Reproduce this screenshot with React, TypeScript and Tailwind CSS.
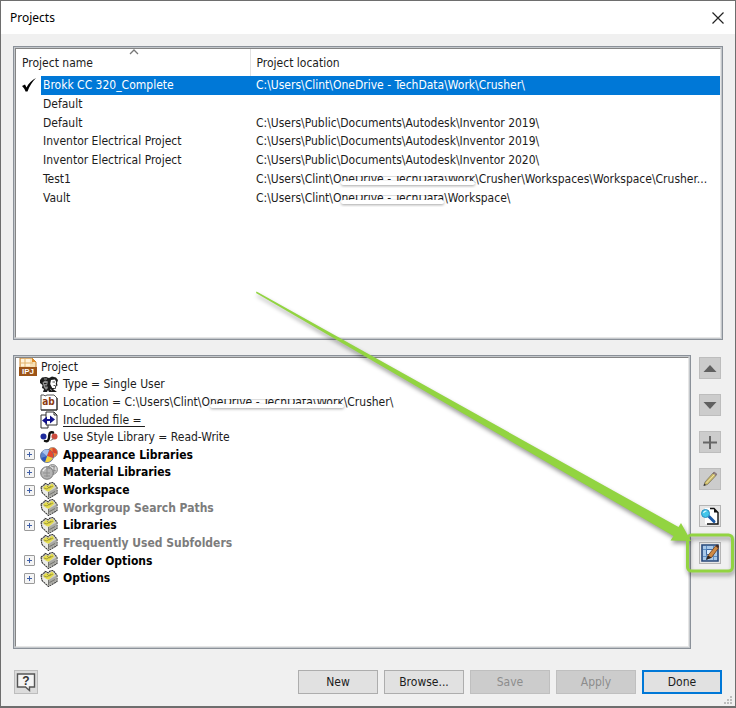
import { useState } from 'react';
import type { ReactNode } from 'react';
import clsx from 'clsx';

type Project = { id: number; name: string; path: [string, string, string] };

// path = [start, redacted part, rest]
const projects: Project[] = [
    { id: 1, name: 'Brokk CC 320_Complete', path: ['C:\\Users\\Clint\\OneDrive - TechData\\Work\\Crusher\\', '', ''] },
    { id: 2, name: 'Default', path: ['', '', ''] },
    { id: 3, name: 'Default', path: ['C:\\Users\\Public\\Documents\\Autodesk\\Inventor 2019\\', '', ''] },
    { id: 4, name: 'Inventor Electrical Project', path: ['C:\\Users\\Public\\Documents\\Autodesk\\Inventor 2019\\', '', ''] },
    { id: 5, name: 'Inventor Electrical Project', path: ['C:\\Users\\Public\\Documents\\Autodesk\\Inventor 2020\\', '', ''] },
    { id: 6, name: 'Test1', path: ['C:\\Users\\Clint\\O', 'neDrive - TechData\\Work', '\\Crusher\\Workspaces\\Workspace\\Crusher...'] },
    { id: 7, name: 'Vault', path: ['C:\\Users\\Clint\\O', 'neDrive - TechData', '\\Workspace\\'] },
];

// Text with white marker strokes over its top and bottom edges
function Redacted({ children }: { children: ReactNode }) {
    return (
        <span className="relative inline-block">
            {children}
            <span className="absolute inset-x-0 top-px h-1 rounded-full bg-white shadow-[0_1px_1px_rgba(0,0,0,0.15)]" />
            <span className="absolute inset-x-0 bottom-[2px] h-1 rounded-full bg-white shadow-[0_1px_3px_rgba(0,0,0,0.35)]" />
        </span>
    );
}

function Path({ parts }: { parts: [string, string, string] }) {
    return (
        <>
            {parts[0]}
            {parts[1] && <Redacted>{parts[1]}</Redacted>}
            {parts[2]}
        </>
    );
}

/* ---------- tree icons ---------- */

function IpjIcon() {
    return (
        <svg viewBox="0 0 18 19" className="h-[19px] w-[18px] shrink-0" aria-hidden="true">
            <path d="M1 1h12l4 4v13H1z" fill="#f6dfb4" stroke="#c9822c" />
            <path d="M2 2h9v7H2z" fill="#fff4dc" />
            <path d="M6 2v8M2 6h12" stroke="#e3b56c" />
            <path d="M13 1v4h4z" fill="#e08a22" />
            <path d="M0 10h18v9H0z" fill="#9c5418" />
            <text x="9" y="17" textAnchor="middle" fontSize="8" fontWeight="700" fill="#fff" fontFamily="Liberation Sans, sans-serif">IPJ</text>
        </svg>
    );
}

function UsersIcon() {
    return (
        <svg viewBox="0 0 18 16" className="h-4 w-[18px] shrink-0" aria-hidden="true">
            <path d="M0 4 2 1.500 6 1l3 1 3-1.500 4 1L18 4l-1 3 .500 2.500-1.500 1v2l-3 .500 4 3H9l-1-2-1 2H3l1-3-2-1 .500-3L0 7z" fill="#1c1c1c" />
            <path d="M2.500 6.500 5 4.500l3 1L7 9.500l1 2.500-2 2-2-2.500z" fill="#8d8d8d" />
            <path d="M4 7.500h2.500M5 10h2" stroke="#222" />
            <path d="M11 4l4-.500 1.200 2.500-.500 2 .700 1.500-1.200.500v2h-3l-2-4z" fill="#fff" />
            <path d="M12.500 6h2.500M13.500 9.500h2" stroke="#222" strokeWidth=".8" />
            <path d="M4 3h3M10 13l2 1.500" stroke="#999" />
        </svg>
    );
}

function LocationIcon() {
    return (
        <svg viewBox="0 0 18 17" className="h-[17px] w-[18px] shrink-0" aria-hidden="true">
            <path d="M1 1h3l1 1 2-1h7l3 3v12H1z" fill="#fff" stroke="#555" />
            <path d="M17 4v12H1" fill="none" stroke="#222" />
            <text x="8.500" y="11" textAnchor="middle" fontSize="10" fontWeight="700" fill="#8b3a12" fontFamily="DejaVu Sans Condensed, sans-serif">ab</text>
        </svg>
    );
}

function IncludedIcon() {
    return (
        <svg viewBox="0 0 18 18" className="h-[18px] w-[18px] shrink-0" aria-hidden="true">
            <path d="M1 4h7v13H1z" fill="#fff" stroke="#333" />
            <path d="M6 1h8l3 3v10H6z" fill="#fff" stroke="#333" />
            <path d="M14 1v3h3" fill="none" stroke="#333" />
            <path d="M2 9.500 7 5.500V8h3V4.500l5 4-5 4V10H7v3.500z" fill="#12128c" />
        </svg>
    );
}

function StyleIcon() {
    return (
        <svg viewBox="0 0 18 12" className="h-3 w-[18px] shrink-0" aria-hidden="true">
            <circle cx="3.500" cy="5.500" r="3" fill="#1d2a9c" />
            <circle cx="14.500" cy="5.500" r="3" fill="#cc4a3c" />
            <path d="M13 1.500C8.500 0 9.500 4.500 9 7s-1.500 4-4 3" fill="none" stroke="#111" strokeWidth="2.400" strokeLinecap="round" />
            <path d="M10.500 9.500 14 7.500" stroke="#777" />
        </svg>
    );
}

function AppearanceIcon() {
    return (
        <svg viewBox="0 0 18 16" className="h-4 w-[18px] shrink-0" aria-hidden="true">
            <circle cx="12.500" cy="5.500" r="5" fill="#f08a3c" stroke="#8b8b8b" strokeWidth=".8" />
            <path d="M12.500 5.500V.800a5 5 0 0 1 4.500 6z" fill="#d9452c" />
            <circle cx="7" cy="9" r="6.500" fill="#5f86cf" stroke="#4a5d88" strokeWidth=".8" />
            <path d="M7 9 2 5a6.500 6.500 0 0 1 7-2z" fill="#a9c3ee" />
            <path d="M7 9 9.500 3A6.500 6.500 0 0 1 13 11z" fill="#e5482d" />
            <path d="M7 9l5.800 2A6.500 6.500 0 0 1 5 15z" fill="#f2d03c" />
            <path d="M7 9 5 15a6.500 6.500 0 0 1-4-4z" fill="#2d55b8" />
        </svg>
    );
}

function MaterialIcon() {
    return (
        <svg viewBox="0 0 18 16" className="h-4 w-[18px] shrink-0" aria-hidden="true">
            <circle cx="12.500" cy="5.500" r="4.900" fill="#d6d6d6" stroke="#777" strokeWidth=".9" />
            <path d="M11 2l4 1M13 6l3 1M14 2v7" stroke="#8c8c8c" />
            <circle cx="7" cy="9" r="6.300" fill="#b4b4b4" stroke="#6d6d6d" strokeWidth=".9" />
            <path d="M4 5.500c2-2 4-1.500 6-1M3 9h7M7 4v9M4 12h6" stroke="#8f8f8f" fill="none" />
            <path d="M3 7c1-2 2-2.500 3-3" stroke="#f1f1f1" strokeWidth="1.300" fill="none" />
        </svg>
    );
}

function FolderIcon() {
    return (
        <svg viewBox="0 0 18 17" className="h-[17px] w-[18px] shrink-0" aria-hidden="true">
            <path d="M1 5 4 3l1-1.500 2 .500 1 1 2-2 3-.500 2 2 2 3v6l-8.500 5L2 10.500z" fill="#d0d0ca" stroke="#333" strokeWidth="1.100" strokeDasharray="2 .6" />
            <path d="M3 5.500 6 3l3 1 3-2.500 2.500 3L9 9.500 6 10z" fill="#e6de4c" />
            <path d="M4 6l3 1 4-3M7 4l2 2 4-2" stroke="#8f8a3a" fill="none" strokeWidth=".8" />
            <path d="M8.500 10 16.500 5.500v5.500l-8 4.500z" fill="#a9a9a4" />
            <path d="M2 6.500 8.500 10v5.500L3 10.500z" fill="#ecece8" />
            <path d="M9.500 12.500 15 9.500M8.500 10v5" stroke="#74746f" />
        </svg>
    );
}

/* ---------- tree ---------- */

type Node = { id: string; label: ReactNode; icon: ReactNode; kind?: 'prop' | 'group' | 'muted' };

const nodes: Node[] = [
    { id: 'type', label: 'Type = Single User', icon: <UsersIcon /> },
    { id: 'location', label: <Path parts={['Location = C:\\Users\\Clint\\O', 'neDrive - TechData\\Work', '\\Crusher\\']} />, icon: <LocationIcon /> },
    { id: 'included', label: <span className="underline underline-offset-2">Included file =&nbsp;</span>, icon: <IncludedIcon /> },
    { id: 'style', label: 'Use Style Library = Read-Write', icon: <StyleIcon /> },
    { id: 'appearance', label: 'Appearance Libraries', icon: <AppearanceIcon />, kind: 'group' },
    { id: 'material', label: 'Material Libraries', icon: <MaterialIcon />, kind: 'group' },
    { id: 'workspace', label: 'Workspace', icon: <FolderIcon />, kind: 'group' },
    { id: 'workgroup', label: 'Workgroup Search Paths', icon: <FolderIcon />, kind: 'muted' },
    { id: 'libraries', label: 'Libraries', icon: <FolderIcon />, kind: 'group' },
    { id: 'frequent', label: 'Frequently Used Subfolders', icon: <FolderIcon />, kind: 'muted' },
    { id: 'folder', label: 'Folder Options', icon: <FolderIcon />, kind: 'group' },
    { id: 'options', label: 'Options', icon: <FolderIcon />, kind: 'group' },
];

function Expander({ name }: { name: string }) {
    return (
        <button type="button" aria-label={`Expand ${name}`} className="flex size-[11px] items-center justify-center rounded-[1px] border border-[#9a9a9a] bg-[#f4f4f4]">
            <svg viewBox="0 0 7 7" className="size-[7px]" aria-hidden="true">
                <path d="M1 3.500h5M3.500 1v5" stroke="#3f5fa8" />
            </svg>
        </button>
    );
}

function Tree() {
    return (
        <ul className="grid h-[229px] auto-rows-fr pl-[3px]">
            <li className="flex items-center gap-1">
                <IpjIcon />
                Project
            </li>
            {nodes.map((node) => (
                <li key={node.id} className="flex items-center whitespace-nowrap">
                    <span className="flex w-[21px] shrink-0 pl-[5px]">
                        {node.kind === 'group' && <Expander name={String(node.label)} />}
                    </span>
                    {node.icon}
                    <span
                        className={clsx('pl-[5px]', {
                            'font-bold text-black': node.kind === 'group',
                            'font-bold text-[#7c7c7c]': node.kind === 'muted',
                        })}
                    >
                        {node.label}
                    </span>
                </li>
            ))}
        </ul>
    );
}

/* ---------- side tools ---------- */

const tools = [
    {
        label: 'Move up',
        disabled: true,
        icon: <path d="M4.500 15 11 8l6.500 7z" fill="#606060" />,
    },
    {
        label: 'Move down',
        disabled: true,
        icon: <path d="M4.500 8h13L11 15z" fill="#606060" />,
    },
    {
        label: 'Add',
        disabled: true,
        icon: <path d="M11 5v13M4 11.500h14" stroke="#666" strokeWidth="2" />,
    },
    {
        label: 'Edit',
        disabled: true,
        icon: (
            <>
                <path d="M5 17.500 6 14 14 5l3 2.500-8.500 9z" fill="#cdbb66" stroke="#7b7664" strokeWidth=".8" />
                <path d="M14 5l1-1 2.800 2L17 7.500z" fill="#9a8686" stroke="#7a6a6a" strokeWidth=".7" />
                <path d="M7.500 15 15.500 6.500" stroke="#efe6b0" />
                <path d="M4.500 18l.800-2.500 1.700 1.500z" fill="#333" />
            </>
        ),
    },
    {
        label: 'Workspace search',
        disabled: false,
        icon: (
            <>
                <path d="M9 3h6l4 4v12H6V3z" fill="#fff" />
                <path d="M11 3.500h4l4 4V19H8" fill="none" stroke="#111" strokeWidth="1.400" />
                <path d="M15 3.500v4h4" fill="#111" />
                <path d="m10 11.500 5 5" stroke="#1c5ba8" strokeWidth="3" strokeLinecap="round" />
                <circle cx="6.500" cy="8.500" r="4" fill="#42c6ea" stroke="#2a8cc0" />
                <path d="M4.500 8c.500-1.500 1.500-2 3-2" stroke="#d8f7ff" strokeWidth="1.200" fill="none" />
            </>
        ),
    },
    {
        label: 'Configure Content Center',
        disabled: false,
        icon: (
            <>
                <path d="M3 3h16v16H3z" fill="#a9c8e8" stroke="#27487a" strokeWidth="1.600" />
                <path d="M4 7.500h14M4 14.500h14M7.500 4v14M14.500 4v14" stroke="#5f8fc4" />
                <path d="M7.500 7.500h6v5h-6z" fill="#d9eafa" stroke="#3d69a4" />
                <path d="M8 17 9 13.500 16.500 4l3 2-7 9.500z" fill="#cf8a45" stroke="#6f3c18" strokeWidth=".8" />
                <path d="m16.500 4 1.500-1.500 2 1.500-.500 2z" fill="#4a2a1a" />
                <path d="M7 18 9 13.500l3.500 2z" fill="#2c2420" />
            </>
        ),
    },
];

function ToolBar() {
    return (
        <div className="flex flex-col gap-[15px] pt-[2px]">
            {tools.map((tool) => (
                <button
                    key={tool.label}
                    type="button"
                    aria-label={tool.label}
                    disabled={tool.disabled}
                    className={clsx(
                        'flex h-[22px] w-[22px] items-center justify-center border',
                        tool.disabled ? 'border-[#bdbdbd] bg-[#cccccc]' : 'border-[#b4b4b4] bg-[#e6e6e6]',
                    )}
                >
                    <svg viewBox="0 0 22 22" className="size-[22px] shrink-0" aria-hidden="true">
                        {tool.icon}
                    </svg>
                </button>
            ))}
        </div>
    );
}

const panel = 'flex-1 border border-[#8b9199] bg-[#c4c8cc] p-px';
const panelInner = 'h-full overflow-hidden border border-t-[#858585] border-l-[#858585] border-r-[#e6e6e6] border-b-[#e6e6e6] bg-white';
const footerButton =
    'h-6 w-20 border text-center border-[#adadad] bg-[#e1e1e1] disabled:border-[#bfbfbf] disabled:bg-[#cccccc] disabled:text-[#8c8c8c]';

export default function App() {
    const [selected, setSelected] = useState(1);

    return (
        <div className="relative flex min-h-screen flex-col overflow-hidden border border-b-2 border-[#6e6e6e] bg-[#f0f0f0] font-['DejaVu_Sans_Condensed','DejaVu_Sans',sans-serif] text-[12px] leading-4 text-[#1c1c1c]">
            {/* title bar */}
            <header className="flex h-[33px] items-center justify-between bg-white pr-[11px] pl-[9px]">
                <h1 className="font-['Noto_Sans',sans-serif] text-[12px] text-black">Projects</h1>
                <button type="button" aria-label="Close">
                    <svg viewBox="0 0 12 12" className="size-3" aria-hidden="true">
                        <path d="M.500.500l11 11M11.500.500l-11 11" stroke="#222" strokeWidth="1.200" />
                    </svg>
                </button>
            </header>

            <main className="flex flex-1 flex-col gap-[15px] px-3 pt-3">
                {/* project list */}
                <section className="flex flex-1 basis-0">
                    <div className={panel}>
                        <div className={panelInner}>
                            <table className="w-full table-fixed border-collapse">
                                <thead>
                                    <tr className="h-[27px]">
                                        <th className="w-[26px] p-0" />
                                        <th className="relative w-[208px] border-r border-[#e2e2e2] p-0 text-left font-normal">
                                            <span className="-ml-5">Project name</span>
                                            <svg viewBox="0 0 10 6" className="absolute top-0 left-[87px] h-[6px] w-[10px]" aria-hidden="true">
                                                <path d="M1 5l4-4 4 4" fill="none" stroke="#777" strokeWidth="1.300" />
                                            </svg>
                                        </th>
                                        <th className="p-0 pl-[6px] text-left font-normal">Project location</th>
                                    </tr>
                                </thead>
                            </table>
                            <table className="h-[131px] w-full table-fixed border-collapse">
                                <tbody>
                                    {projects.map((project) => {
                                        const active = project.id === selected;
                                        return (
                                            <tr key={project.id} onClick={() => setSelected(project.id)}>
                                                <td className="w-[25px] p-0 pl-1">
                                                    {project.id === 1 && (
                                                        <svg viewBox="0 0 16 14" className="ml-px h-[14px] w-4" aria-label="Active project">
                                                            <path d="M1 8l3-1.500 1.500 3C7.500 5.500 11 2 15 0c-3.500 3.500-6.500 8-8.500 13.500H4.500C4 11.500 2.500 9.500 1 8z" fill="#000" />
                                                        </svg>
                                                    )}
                                                </td>
                                                <td className={clsx('w-[208px] p-0 pl-[2px] whitespace-nowrap', active && 'bg-[#0078d7] text-white')}>
                                                    {project.name}
                                                </td>
                                                <td className={clsx('truncate p-0 pl-[7px]', active && 'bg-[#0078d7] text-white')}>
                                                    <Path parts={project.path} />
                                                </td>
                                            </tr>
                                        );
                                    })}
                                </tbody>
                            </table>
                        </div>
                    </div>
                </section>

                {/* project settings */}
                <section className="flex flex-1 basis-0 gap-2 pr-[2px]">
                    <div className={panel}>
                        <div className={panelInner}>
                            <Tree />
                        </div>
                    </div>
                    <ToolBar />
                </section>
            </main>

            <footer className="flex items-center justify-between px-[13px] pt-[21px] pb-3">
                <button type="button" aria-label="Help" className="flex h-6 w-6 items-center justify-center border border-[#bdbdbd] bg-[#dcdcdc]">
                    <svg viewBox="0 0 20 20" className="size-5" aria-hidden="true">
                        <path d="M1.500 2h17v13h-5v3.500L9.500 15h-8z" fill="#f4f4f4" stroke="#555" strokeWidth="1.400" />
                        <text x="10" y="12.500" textAnchor="middle" fontSize="12" fontWeight="700" fill="#333" fontFamily="Liberation Sans, sans-serif">?</text>
                    </svg>
                </button>
                <div className="flex gap-[6px]">
                    <button type="button" className={footerButton}>New</button>
                    <button type="button" className={footerButton}>Browse...</button>
                    <button type="button" className={footerButton} disabled>Save</button>
                    <button type="button" className={footerButton} disabled>Apply</button>
                    <button type="button" className="h-6 w-20 border-2 border-[#0078d7] bg-[#e1e1e1] text-center">Done</button>
                </div>
            </footer>

            {/* resize grip */}
            <svg viewBox="0 0 10 10" className="absolute right-[2px] bottom-px size-[10px]" aria-hidden="true">
                <path d="M7 1h2v2H7zM4 4h2v2H4zM7 4h2v2H7zM1 7h2v2H1zM4 7h2v2H4zM7 7h2v2H7z" fill="#bdbdbd" />
            </svg>

            {/* callout arrow and frame */}
            <svg viewBox="0 0 736 708" className="pointer-events-none absolute -top-px -left-px h-[708px] w-[736px] drop-shadow-[1px_3px_2px_rgba(0,0,0,0.4)]" aria-hidden="true">
                <path d="M256.500 291.500 678.500 527l2.500-4 10 18-20.500-.500 3-4.500L256 293z" fill="#92d441" />
                <rect x="687.500" y="535" width="45" height="36" rx="4" fill="none" stroke="#92d441" strokeWidth="3" />
            </svg>
        </div>
    );
}
